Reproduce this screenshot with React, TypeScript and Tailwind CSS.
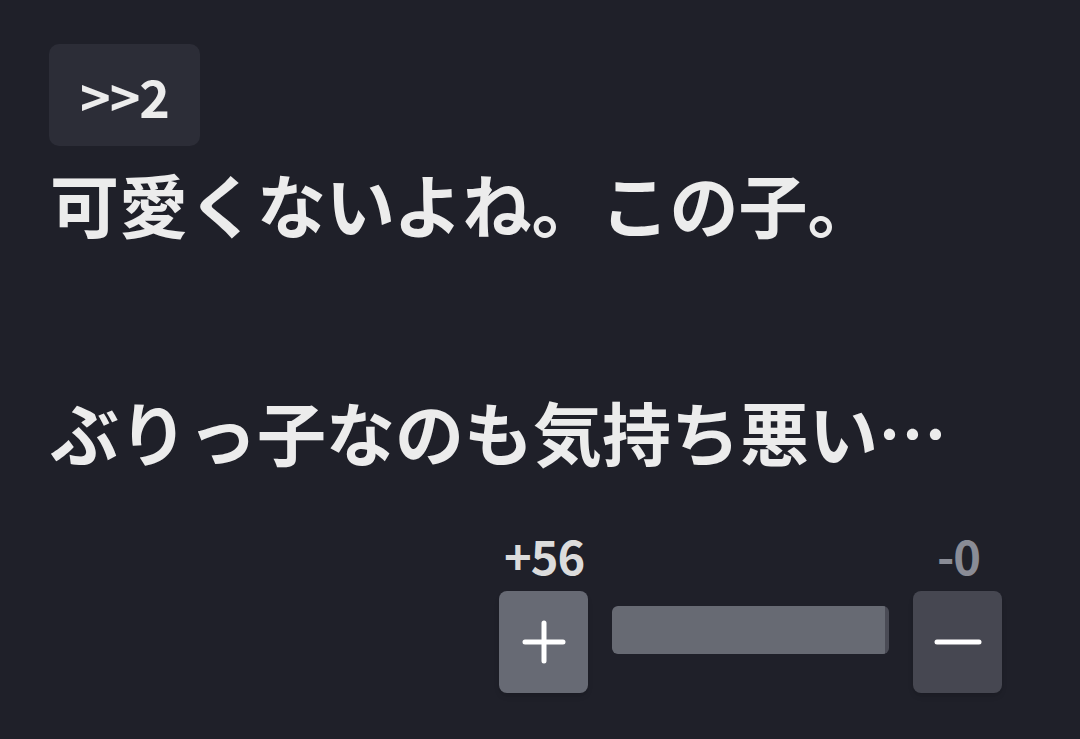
import React from 'react';

const font = { fontFamily: '"Noto Sans CJK JP", "Noto Sans", sans-serif' };

export default function App() {
  const up = 56;
  const down = 0;
  const ratio = up + down === 0 ? 50 : (up / (up + down)) * 100;

  return (
    <div className="w-[1080px] h-[739px] bg-[#1f2029] overflow-hidden" style={font}>
      <div className="pl-[49px] pt-[44px]">
        <div className="w-[151px] h-[102px] rounded-[10px] bg-[#2c2d37] flex items-center justify-center pt-[2px] text-[#ececec] text-[52px] font-semibold tracking-[-1px]">
          &gt;&gt;2
        </div>
        <div className="pl-[1px] text-[#ececec] text-[69px] font-bold leading-[114px]">
          <p>可愛くないよね。この子。</p>
          <p>&nbsp;</p>
          <p>ぶりっ子なのも気持ち悪い…</p>
        </div>
      </div>
      <div className="ml-[499px] mt-[38px] w-[503px]">
        <div className="flex justify-between items-end h-[52px] text-[47px] leading-none font-semibold tracking-[-1px]">
          <span className="text-[#dcdcdc] pl-[5px]">+{up}</span>
          <span className="text-[#8a8c96] pr-[22px]">-{down}</span>
        </div>
        <div className="mt-[13px] flex items-start gap-[24px]">
          <button className="w-[89px] h-[102px] rounded-[8px] bg-[#676a74] flex items-center justify-center shadow-md">
            <svg width="44" height="44" viewBox="0 0 44 44">
              <path d="M22 3v38M3 22h38" stroke="#fff" strokeWidth="5" strokeLinecap="round" />
            </svg>
          </button>
          <div className="mt-[15px] flex-1 h-[48px] rounded-[6px] bg-[#4a4b55] overflow-hidden">
            <div className="h-full bg-[#676a73] rounded-l-[6px]" style={{ width: `${ratio - 1.5}%` }} />
          </div>
          <button className="w-[89px] h-[102px] rounded-[8px] bg-[#464751] flex items-center justify-center shadow-md">
            <svg width="48" height="44" viewBox="0 0 48 44">
              <path d="M3 22h42" stroke="#fff" strokeWidth="5" strokeLinecap="round" />
            </svg>
          </button>
        </div>
      </div>
    </div>
  );
}
